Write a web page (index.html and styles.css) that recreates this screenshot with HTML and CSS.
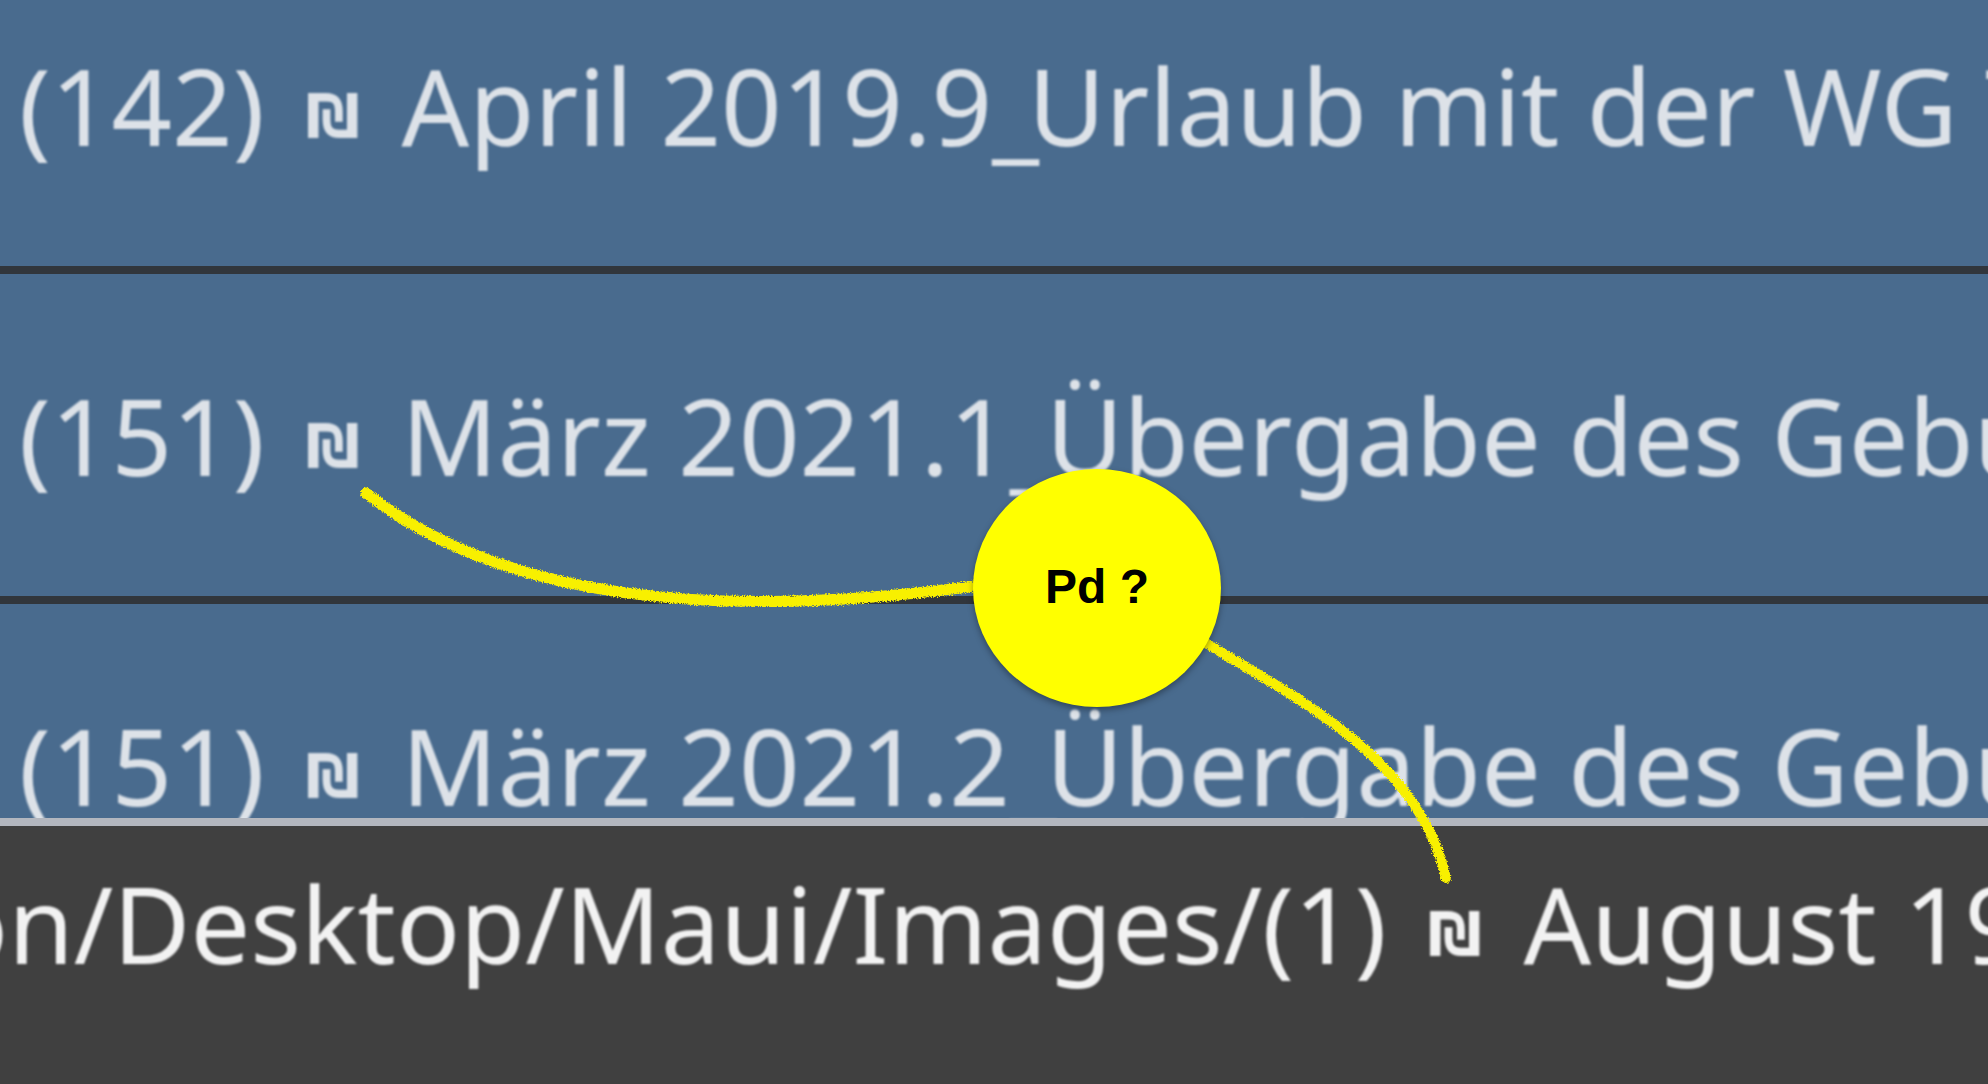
FILE: index.html
```html
<!DOCTYPE html>
<html lang="de">
<head>
<meta charset="utf-8">
<title>Maui – Images</title>
<link rel="stylesheet" href="styles.css">
</head>
<body>
<div class="app">
  <div class="list">
    <ul class="list-inner">
      <li class="row"><span class="name">(142)<span class="sym">₪</span>April 2019.9<span class="us">_</span>Urlaub mit der WG Tag 3</span></li>
      <li class="row"><span class="name">(151)<span class="sym">₪</span>März 2021.1<span class="us">_</span>Übergabe des Geburtstagsgeschenks</span></li>
      <li class="row"><span class="name">(151)<span class="sym">₪</span>März 2021.2<span class="us">_</span>Übergabe des Geburtstagsgeschenks</span></li>
    </ul>
  </div>
  <div class="pathbar"><span class="path">on/Desktop/Maui/Images/(1)<span class="sym">₪</span>August 1998</span></div>
</div>

<svg class="annot" width="1988" height="1084" viewBox="0 0 1988 1084" aria-hidden="true">
  <defs>
    <filter id="rough" x="-5%" y="-5%" width="110%" height="110%">
      <feTurbulence type="fractalNoise" baseFrequency="0.8" numOctaves="2" seed="3" result="n"/>
      <feDisplacementMap in="SourceGraphic" in2="n" scale="5" xChannelSelector="R" yChannelSelector="G"/>
    </filter>
  </defs>
  <path class="stroke s1" d="M366 493 C 470 575, 650 630, 975 586"/>
  <path class="stroke s2" d="M1204 642 C 1300 700, 1420 760, 1446 878"/>
</svg>
<div class="bubble"><span class="bubble-text">Pd ?</span></div>
</body>
</html>
```

FILE: styles.css
```css
html, body {
  margin: 0;
  padding: 0;
}
body {
  width: 1988px;
  height: 1084px;
  overflow: hidden;
  background: #404040;
  position: relative;
  font-family: "Noto Sans", "Open Sans", "DejaVu Sans", sans-serif;
}
.app {
  display: flex;
  flex-direction: column;
  height: 1084px;
}
.list {
  height: 818px;
  overflow: hidden;
  background: #496b8e;
  flex: none;
}
.list-inner {
  list-style: none;
  margin: -56px 0 0 0;
  padding: 0;
}
.row {
  height: 322px;
  box-sizing: content-box;
  border-bottom: 8px solid #31363c;
  padding: 0 0 0 19px;
  display: block;
  overflow: hidden;
}
.name {
  display: block;
  padding-top: 108px;
  font-size: 106px;
  line-height: 106px;
  color: #dde2e8;
  white-space: nowrap;
  filter: blur(0.8px);
}
.us {
  letter-spacing: -11px;
  vertical-align: -4px;
}
.sym {
  display: inline-block;
  width: 137px;
  text-align: center;
  font-family: "DejaVu Sans", "Noto Sans", sans-serif;
  font-size: 60px;
  line-height: 60px;
  vertical-align: 9px;
  font-weight: bold;
}
.pathbar {
  flex: 1;
  border-top: 8px solid #b3b7bf;
  background: #404040;
  overflow: hidden;
}
.path {
  display: block;
  margin-left: -56px;
  padding-top: 44px;
  font-size: 106px;
  line-height: 106px;
  color: #f2f2f2;
  white-space: nowrap;
  filter: blur(0.8px);
}
.annot {
  position: absolute;
  left: 0;
  top: 0;
  pointer-events: none;
}
.stroke {
  fill: none;
  stroke: #f8f000;
  stroke-linecap: round;
  filter: url(#rough);
}
.s1 { stroke-width: 11; }
.s2 { stroke-width: 10; }
.bubble {
  position: absolute;
  left: 973px;
  top: 469px;
  width: 248px;
  height: 238px;
  border-radius: 50%;
  background: #ffff00;
  box-shadow: 0 3px 6px rgba(0, 0, 0, 0.35);
  display: flex;
  align-items: center;
  justify-content: center;
}
.bubble-text {
  font-family: "Liberation Sans", Arial, sans-serif;
  font-weight: bold;
  font-size: 48px;
  color: #000;
  line-height: 1;
  margin-top: -2px;
}
```
